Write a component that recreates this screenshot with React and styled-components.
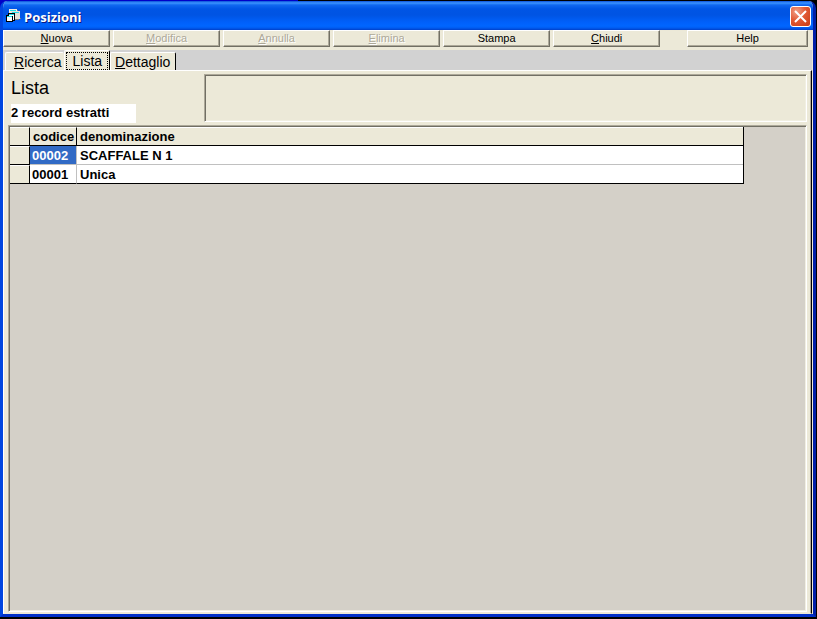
import React from 'react';
import styled, { createGlobalStyle, css } from 'styled-components';

const GlobalStyle = createGlobalStyle`
  * {
    box-sizing: border-box;
  }

  body {
    margin: 0;
    background: #000;
    font-family: "Liberation Sans", Arial, sans-serif;
    color: #000;
  }

  button {
    font-family: inherit;
    color: inherit;
  }
`;

const sunken = css`
  border: 1px solid;
  border-color: #aca899 #fff #fff #aca899;
  box-shadow: inset 1px 1px #716f64, inset -1px -1px #f1efe2;
`;

const Desktop = styled.div`
  display: flex;
  min-height: 100vh;
  padding: 1px 1px 2px 0;
  background: linear-gradient(#0000c8, #0000c8) 0 0 / 298px 8px no-repeat #000;
`;

const Window = styled.main`
  flex: 1;
  display: flex;
  flex-direction: column;
  border: solid;
  border-width: 0 3px 3px;
  border-color: #0046e0 #001fa8 #0030c8 #0046e0;
  border-radius: 7px 7px 0 0;
  background: #ece9d8;
  overflow: hidden;
`;

const TitleBar = styled.header`
  display: flex;
  align-items: center;
  height: 29px;
  margin: 0 -3px;
  padding: 2px 5px 0 6px;
  background: linear-gradient(
    #0a50d8 0,
    #3c94ff 2px,
    #1068f0 4px,
    #0055e5 8px,
    #0054e3 14px,
    #0060fa 21px,
    #0066ff 25px,
    #005bf0 27px,
    #003fc8 29px
  );
`;

const WindowTitle = styled.h1`
  flex: 1;
  margin: 0 0 0 3px;
  font: bold 13px/16px "Open Sans", "Noto Sans", sans-serif;
  color: #fff;
  text-shadow: 1px 1px #0a1883;
`;

const CloseButton = styled.button`
  display: flex;
  align-items: center;
  justify-content: center;
  width: 21px;
  height: 21px;
  padding: 0;
  border: 1px solid #fff;
  border-radius: 3px;
  background: radial-gradient(circle at 30% 25%, #f0a088, #e25a35 45%, #c63a12);
`;

const Toolbar = styled.nav`
  display: flex;
  gap: 3px;
  height: 20px;
  padding: 0 5px 3px 0;
`;

const ToolButton = styled.button`
  flex: ${(props) => (props.$wide ? 121 : 107)} 1 0;
  margin-left: ${(props) => (props.$wide ? 24 : 0)}px;
  padding: 0 0 1px;
  border: 1px solid;
  border-color: #fff #716f64 #716f64 #fff;
  background: #ece9d8;
  box-shadow: inset -1px -1px #aca899;
  font-size: 11px;
  line-height: 14px;

  &:disabled {
    color: #aca899;
    text-shadow: 1px 1px #fff;
  }
`;

const TabStrip = styled.div`
  display: flex;
  align-items: flex-end;
  height: 20px;
  margin-right: 1px;
  padding-left: 2px;
  background: #d2d2d2;
`;

const Tab = styled.button`
  height: ${(props) => (props.$active ? 20 : 18)}px;
  padding: ${(props) => (props.$active ? '0 1px' : '1px 5px 0 4px')};
  border: solid;
  border-width: 1px 1px 0;
  border-color: #fff #000 #000 #fff;
  border-radius: 2px 2px 0 0;
  background: #ece9d8;
  font-size: 14px;
  line-height: 16px;

  &:first-child {
    padding-left: 8px;
    padding-right: 2px;
    border-right-color: #ece9d8;
  }
`;

const FocusText = styled.span`
  display: block;
  height: 18px;
  padding: 0 5px;
  border: 1px dotted #000;
  line-height: 16px;
`;

const TabPage = styled.section`
  flex: 1;
  display: flex;
  flex-direction: column;
  gap: 3px;
  margin-right: 1px;
  padding: 3px 4px 1px 4px;
  border: 1px solid;
  border-color: #fff #000 #ece9d8 #fff;
  box-shadow: inset -1px 0 #aca899;
`;

const Summary = styled.div`
  display: flex;
  height: 48px;
`;

const SummaryText = styled.div`
  width: 196px;
  padding: 4px 0 0 3px;
`;

const ListTitle = styled.h2`
  margin: 0 0 6px;
  font-size: 18px;
  font-weight: normal;
  line-height: 20px;
`;

const RecordCount = styled.output`
  display: block;
  width: 125px;
  height: 19px;
  background: #fff;
  font-size: 13px;
  font-weight: bold;
  line-height: 18px;
`;

const FilterBox = styled.div`
  flex: 1;
  ${sunken}
`;

const GridFrame = styled.div`
  flex: 1;
  padding: 1px;
  background: #d4d0c8;
  ${sunken}
`;

const Grid = styled.table`
  width: 100%;
  max-width: 734px;
  table-layout: fixed;
  border-collapse: separate;
  border-spacing: 0;
  border-right: 1px solid #000;
  font-size: 13px;
  font-weight: bold;
  line-height: 16px;
  text-align: left;
`;

const HeadCell = styled.th`
  width: ${(props) => props.$width || 'auto'};
  height: 19px;
  padding: 0 0 0 3px;
  border: solid;
  border-width: 1px 1px 1px 0;
  border-color: #fff #000 #000;
  background: #ece9d8;
  white-space: nowrap;

  &:last-child {
    border-right: 0;
  }
`;

const MarkerCell = styled.td`
  height: 19px;
  padding: 0;
  border: solid;
  border-width: 1px 1px 1px 0;
  border-color: #fff #000 #000;
  background: #ece9d8;
`;

const Cell = styled.td`
  height: 19px;
  padding: 2px 0 0 ${(props) => (props.$code ? 2 : 3)}px;
  border: solid #c0c0c0;
  border-width: 0 ${(props) => (props.$code ? 1 : 0)}px 1px 0;
  background: ${(props) => (props.$selected ? '#316ac5' : '#fff')};
  background-clip: padding-box;
  color: ${(props) => (props.$selected ? '#fff' : '#000')};

  tr:last-child > & {
    border-bottom-color: #000;
  }
`;

const actions = [
  { key: 'N', rest: 'uova' },
  { key: 'M', rest: 'odifica', disabled: true },
  { key: 'A', rest: 'nnulla', disabled: true },
  { key: 'E', rest: 'limina', disabled: true },
  { rest: 'Stampa' },
  { key: 'C', rest: 'hiudi' },
  { rest: 'Help', wide: true },
];

const positions = [
  { codice: '00002', denominazione: 'SCAFFALE N 1' },
  { codice: '00001', denominazione: 'Unica' },
];

function FormIcon() {
  return (
    <svg width="15" height="15" viewBox="0 0 15 15" shapeRendering="crispEdges" aria-hidden="true">
      <path d="M3 0h8v4H3z" fill="#f0ece4" />
      <path d="M4 1h6v1H4z" fill="#20dce4" />
      <path d="M5 2h9v8H5z" fill="#e4e0d8" />
      <path d="M6 3h7v1H6z" fill="#20dce4" />
      <path d="M11 1h1v1h-1zM14 9h1v1h-1zM8 10h5v1H8z" fill="#808080" />
      <path d="M2 4h7v8H7v1H0V6h2z" fill="#000" />
      <path d="M3 6h5v5H7V7H3zM1 8h5v4H1z" fill="#fff" />
      <path d="M3 5h5v1H3zM1 7h5v1H1z" fill="#20dce4" />
    </svg>
  );
}

function App() {
  return (
    <>
      <GlobalStyle />
      <Desktop>
        <Window>
          <TitleBar>
            <FormIcon />
            <WindowTitle>Posizioni</WindowTitle>
            <CloseButton aria-label="Chiudi finestra">
              <svg width="15" height="15" viewBox="0 0 15 15" aria-hidden="true">
                <path d="M2 2l11 11M13 2l-11 11" stroke="#fff" strokeWidth="2" />
              </svg>
            </CloseButton>
          </TitleBar>

          <Toolbar>
            {actions.map(({ key, rest, disabled, wide }) => (
              <ToolButton key={rest} disabled={disabled} $wide={wide}>
                {key && <u>{key}</u>}
                {rest}
              </ToolButton>
            ))}
          </Toolbar>

          <TabStrip role="tablist">
            <Tab role="tab" aria-selected="false"><u>R</u>icerca</Tab>
            <Tab role="tab" aria-selected="true" $active>
              <FocusText>Lista</FocusText>
            </Tab>
            <Tab role="tab" aria-selected="false"><u>D</u>ettaglio</Tab>
          </TabStrip>

          <TabPage role="tabpanel">
            <Summary>
              <SummaryText>
                <ListTitle>Lista</ListTitle>
                <RecordCount>2 record estratti</RecordCount>
              </SummaryText>
              <FilterBox />
            </Summary>

            <GridFrame>
              <Grid>
                <thead>
                  <tr>
                    <HeadCell $width="20px" />
                    <HeadCell $width="47px">codice</HeadCell>
                    <HeadCell>denominazione</HeadCell>
                  </tr>
                </thead>
                <tbody>
                  {positions.map((position, index) => (
                    <tr key={position.codice}>
                      <MarkerCell />
                      <Cell $code $selected={index === 0}>{position.codice}</Cell>
                      <Cell>{position.denominazione}</Cell>
                    </tr>
                  ))}
                </tbody>
              </Grid>
            </GridFrame>
          </TabPage>
        </Window>
      </Desktop>
    </>
  );
}

export default App;
